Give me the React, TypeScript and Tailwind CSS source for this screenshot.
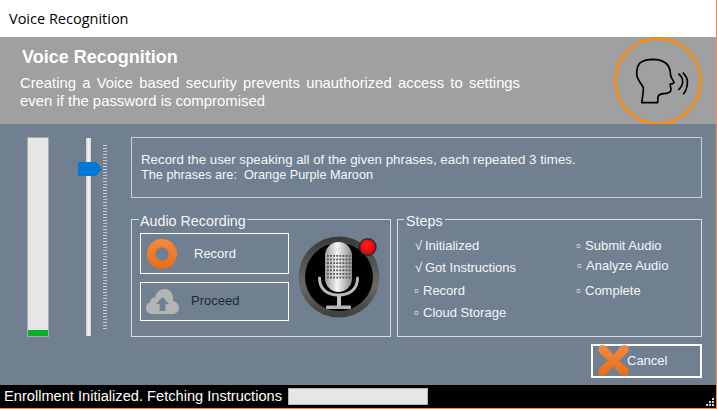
const SANS = "font-['Liberation_Sans',Arial,sans-serif]";

function HeadIcon() {
  return (
    <svg width="88" height="88" viewBox="0 0 88 88" fill="none" className="shrink-0">
      <circle cx="44" cy="44" r="42.5" stroke="#ff8c00" strokeWidth="2.4" />
      <path
        d="M27.7 65.7 C28.5 60 29.5 55 29.3 50.7 C27 46 22.7 42 22.7 37.3 C22.7 31 24 27.5 26.5 25.5 C30 22.8 35 22.3 39.3 22.3 C46 22.5 52 25 54.3 29 C56 32 56.5 36 56.7 39 C57.5 42 60 44 60 45.7 C59 47 57 46.8 56 47.3 C56.5 49 57.5 52 56.7 54 C55 56.5 52 56.5 49.3 56.7 C46.5 57 45 57.5 44.3 59 C43.7 61 43.8 63.5 43.7 65.7 Z"
        stroke="#000"
        strokeWidth="1.7"
        strokeLinejoin="round"
      />
      <path d="M64.3 36.7 C67 38.5 68.7 41.5 68.7 44.5 C68.7 47.5 67 50.5 64.3 53" stroke="#000" strokeWidth="1.7" />
      <path d="M68.7 35.7 C72 38.5 73.6 42 73.4 46 C73.2 50.5 71.5 54.5 69.3 57.3" stroke="#000" strokeWidth="1.7" />
    </svg>
  );
}

function RecordIcon() {
  return (
    <svg width="30" height="30" viewBox="0 0 30 30">
      <defs>
        <linearGradient id="rec" x1="0" y1="0" x2="0" y2="1">
          <stop offset="0" stopColor="#f58a3e" />
          <stop offset="1" stopColor="#e86c18" />
        </linearGradient>
      </defs>
      <path fillRule="evenodd" fill="url(#rec)" d="M15 0a15 15 0 1 0 0 30a15 15 0 1 0 0-30ZM15 8.300a6.700 6.700 0 1 1 0 13.400a6.700 6.700 0 1 1 0-13.400Z" />
    </svg>
  );
}

function CloudIcon() {
  return (
    <svg width="33" height="25" viewBox="0 0 33 25">
      <path fill="#b4b4b4" d="M6 25 C2.5 25 0 22.5 0 19 C0 16 2 13.7 4.6 13 C4.5 12.5 4.5 12 4.6 11.4 C5 9.3 7 8 9 8.5 C10.3 3.5 14 0 18.5 0 C23.5 0 27 3.8 27 9 C27 10 27 11 26.8 11.7 C30.3 12.5 33 15.3 33 18.7 C33 22.5 30 25 26.5 25 Z" />
      <path fill="#708090" d="M16.5 8 L23 15 H19.3 V22 H13.7 V15 H10 Z" />
    </svg>
  );
}

function CancelIcon() {
  return (
    <svg width="31" height="31" viewBox="0 0 31 31">
      <defs>
        <linearGradient id="cx" x1="0" y1="0" x2="0" y2="1">
          <stop offset="0" stopColor="#f58a3e" />
          <stop offset="1" stopColor="#e86c18" />
        </linearGradient>
      </defs>
      <path
        fill="url(#cx)"
        d="M1.5 1.5 C3 -0.3 6 -0.3 8 1.2 L15.5 10 L23 1.2 C25 -0.3 28 -0.3 29.5 1.5 C31.2 3.5 31 6 29.5 7.8 L21 15.5 L29.5 23.2 C31 25 31.2 27.5 29.5 29.5 C28 31.3 25 31.3 23 29.8 L15.5 21 L8 29.8 C6 31.3 3 31.3 1.5 29.5 C-0.2 27.5 0 25 1.5 23.2 L10 15.5 L1.5 7.8 C0 6 -0.2 3.5 1.5 1.5 Z"
      />
    </svg>
  );
}

function MicIcon() {
  const holes = [];
  for (let r = 0; r < 7; r++) {
    for (let c = 0; c < 8; c++) {
      holes.push(<rect key={`${r}-${c}`} x={29 + c * 3.1} y={29 + r * 3.6} width="1.8" height="1.8" fill="#555" />);
    }
  }
  return (
    <svg width="92" height="92" viewBox="0 0 92 92" className="shrink-0">
      <defs>
        <linearGradient id="ring" x1="0" y1="0" x2="0" y2="1">
          <stop offset="0" stopColor="#3a3a3a" />
          <stop offset="0.6" stopColor="#6a6a6a" />
          <stop offset="1" stopColor="#3c3c3c" />
        </linearGradient>
        <linearGradient id="body" x1="0" y1="0" x2="1" y2="0">
          <stop offset="0" stopColor="#9a9a9a" />
          <stop offset="0.45" stopColor="#f4f4f4" />
          <stop offset="1" stopColor="#8c8c8c" />
        </linearGradient>
        <radialGradient id="red" cx="0.45" cy="0.35" r="0.7">
          <stop offset="0" stopColor="#ff2020" />
          <stop offset="1" stopColor="#d80000" />
        </radialGradient>
      </defs>
      <circle cx="41" cy="51" r="40.500" fill="url(#ring)" />
      <circle cx="41" cy="51" r="34" fill="#000" />
      <rect x="27" y="16" width="27" height="50" rx="13.500" fill="url(#body)" />
      {holes}
      <path d="M21.500 52 C21.500 63 29 69 40.500 69 C52 69 59.500 63 59.500 52" fill="none" stroke="#b9b9b9" strokeWidth="3" strokeLinecap="round" />
      <rect x="39" y="69" width="4" height="12" fill="#c4c4c4" />
      <rect x="28" y="79.500" width="25" height="3.500" rx="1" fill="#b4b4b4" />
      <circle cx="69.700" cy="21" r="9" fill="#2a2a2a" />
      <circle cx="69.700" cy="21" r="7.500" fill="url(#red)" />
    </svg>
  );
}

function Step({ mark, label, className }: { mark: string; label: string; className: string }) {
  return (
    <div className={`flex h-[14px] items-center text-[13px] leading-[14px] text-[#f4f6f8] ${className}`}>
      <span className="mr-[3px] w-[7px] text-center">{mark}</span>
      <span>{label}</span>
    </div>
  );
}

export default function App() {
  return (
    <div className={`${SANS} flex h-[409px] w-[717px] flex-col overflow-hidden border-r border-b border-[#e98a5f] bg-white`}>
      {/* title bar */}
      <div className="flex h-[37px] shrink-0 items-center pl-[9px] font-['Open_Sans',sans-serif] text-[14.5px] text-black">
        Voice Recognition
      </div>

      {/* header */}
      <div className="flex h-[87px] shrink-0 items-center justify-between bg-[#a0a0a0] pr-[14px] pl-[20px] text-white">
        <div className="w-[500px]">
          <div className="mt-[-5px] pl-[2px] text-[18px] leading-[20px] font-bold">Voice Recognition</div>
          <p className="mt-[7px] text-[14.8px] leading-[18px] whitespace-nowrap [text-align-last:justify]">
            Creating a Voice based security prevents unauthorized access to settings
          </p>
          <p className="text-[14.9px] leading-[18px]">even if the password is compromised</p>
        </div>
        <HeadIcon />
      </div>

      {/* body */}
      <div className="flex flex-1 bg-[#708090] pt-[13px] text-[#f4f6f8]">
        <div className="ml-[27px] flex h-[200px] w-[22px] flex-col justify-end border border-[#a9a9a9] bg-[#e6e6e6]">
          <div className="h-[6px] bg-[#06b025]" />
        </div>

        <div className="relative ml-[37px] flex h-[199px] w-[45px] shrink-0 pt-[1px]">
          <div className="h-[198px] w-[5px] bg-[linear-gradient(to_right,#cfcfcf,#f4f4f4,#cfcfcf)]" />
          <div className="mt-[7px] ml-[12px] h-[186px] w-[4px] bg-[repeating-linear-gradient(to_bottom,#c8ccd0_0,#c8ccd0_1px,transparent_1px,transparent_3px)]" />
          <svg width="24" height="14" viewBox="0 0 24 14" className="absolute top-[25px] left-[-8px]">
            <path fill="#0078d7" d="M0 0H18L23 6V8L18 14H0Z" />
          </svg>
        </div>

        <div className="flex w-[571px] flex-col">
          <div className="flex h-[61px] flex-col border border-[#c8ced6] pt-[14px] pl-[9px] leading-[15px]">
            <div className="text-[13.3px]">Record the user speaking all of the given phrases, each repeated 3 times.</div>
            <div className="mt-[1px] text-[12.7px]">The phrases are:&nbsp; Orange Purple Maroon</div>
          </div>

          <div className="mt-[11px] flex gap-[6px]">
            <fieldset className="h-[128px] w-[260px] border border-[#d6dbe1] pb-0 pl-[8px]">
              <legend className="ml-[-1px] h-[20px] px-[1px] pt-[5px] text-[14.3px] leading-[14px]">Audio Recording</legend>
              <div className="mt-[4px] flex items-start gap-[9px]">
                <div className="flex w-[149px] flex-col gap-[8px]">
                  <button className="flex h-[41px] items-center border border-white pl-[6px] text-[13px] text-[#f4f6f8]">
                    <RecordIcon />
                    <span className="ml-[17px]">Record</span>
                  </button>
                  <button className="flex h-[39px] items-center border border-white pl-[5px] text-[13px] text-[#1f2a38]">
                    <CloudIcon />
                    <span className="mb-[1px] ml-[12px]">Proceed</span>
                  </button>
                </div>
                <div className="mt-[-7px]">
                  <MicIcon />
                </div>
              </div>
            </fieldset>

            <fieldset className="h-[128px] w-[305px] border border-[#d6dbe1] pl-[16px]">
              <legend className="ml-[-10px] h-[20px] px-[2px] pt-[5px] text-[14.3px] leading-[14px]">Steps</legend>
              <div className="flex">
                <div className="mt-[10px] w-[161px]">
                  <Step mark="√" label="Initialized" className="ml-[1px]" />
                  <Step mark="√" label="Got Instructions" className="mt-[8px] ml-[1px]" />
                  <Step mark="▫" label="Record" className="mt-[9px] ml-[-1px]" />
                  <Step mark="▫" label="Cloud Storage" className="mt-[8px] ml-[-1px]" />
                </div>
                <div className="mt-[10px]">
                  <Step mark="▫" label="Submit Audio" className="" />
                  <Step mark="▫" label="Analyze Audio" className="mt-[6px] ml-[1px]" />
                  <Step mark="▫" label="Complete" className="mt-[11px]" />
                </div>
              </div>
            </fieldset>
          </div>

          <div className="mt-[7px] flex justify-end">
            <button className="flex h-[34px] w-[111px] items-center border-2 border-white pl-[5px] text-[13px] text-[#f4f6f8]">
              <span className="mt-[-1px]"><CancelIcon /></span>
              <span className="ml-[-2px]">Cancel</span>
            </button>
          </div>
        </div>
      </div>

      {/* status bar */}
      <div className="relative flex h-[23px] shrink-0 items-center bg-black pl-[4px] text-[14.63px] text-white">
        <span>Enrollment Initialized. Fetching Instructions</span>
        <div className="ml-[6px] h-[17px] w-[140px] border border-[#b5b5b5] bg-[#e6e6e6]" />
        <div className="absolute right-[2px] bottom-[2px] grid grid-cols-3 gap-[1px]">
          {[0, 0, 1, 0, 1, 1, 1, 1, 1].map((v, i) => (
            <div key={i} className={`h-[2px] w-[2px] ${v ? "bg-[#d8d8d8]" : "bg-transparent"}`} />
          ))}
        </div>
      </div>
    </div>
  );
}
